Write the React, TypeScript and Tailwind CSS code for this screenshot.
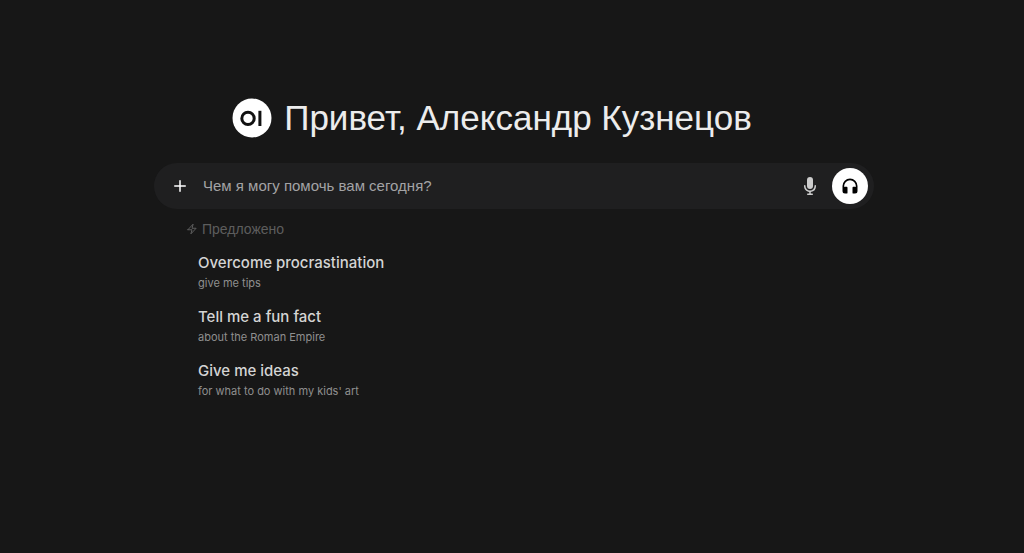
import React, { useState } from 'react'

const suggestions = [
  { title: 'Overcome procrastination', subtitle: 'give me tips' },
  { title: 'Tell me a fun fact', subtitle: 'about the Roman Empire' },
  { title: 'Give me ideas', subtitle: "for what to do with my kids' art" },
]

function Logo() {
  return (
    <svg viewBox="0 0 40 40" className="size-10 shrink-0" aria-hidden="true">
      <circle cx="20" cy="20" r="19.5" fill="#fff" />
      <circle cx="16" cy="20.4" r="6.2" fill="none" stroke="#111" strokeWidth="3" />
      <rect x="26.4" y="12.8" width="3" height="15.2" fill="#111" />
    </svg>
  )
}

function PlusIcon() {
  return (
    <svg viewBox="0 0 20 20" fill="currentColor" className="size-5" aria-hidden="true">
      <path d="M10.75 4.75a.75.75 0 0 0-1.5 0v4.5h-4.5a.75.75 0 0 0 0 1.5h4.5v4.5a.75.75 0 0 0 1.5 0v-4.5h4.5a.75.75 0 0 0 0-1.5h-4.5v-4.5Z" />
    </svg>
  )
}

function MicIcon() {
  return (
    <svg viewBox="0 0 20 20" fill="currentColor" className="size-5" aria-hidden="true">
      <path d="M7 4a3 3 0 0 1 6 0v6a3 3 0 1 1-6 0V4Z" />
      <path d="M5.5 9.643a.75.75 0 0 0-1.5 0V10c0 3.06 2.29 5.585 5.25 5.954V17.5h-1.5a.75.75 0 0 0 0 1.5h4.5a.75.75 0 0 0 0-1.5h-1.5v-1.546A6.001 6.001 0 0 0 16 10v-.357a.75.75 0 0 0-1.5 0V10a4.5 4.5 0 0 1-9 0v-.357Z" />
    </svg>
  )
}

function HeadphonesIcon() {
  return (
    <svg viewBox="0 0 24 24" fill="currentColor" className="size-5" aria-hidden="true">
      <path d="M12 5a7 7 0 0 0-7 7v1.17c.313-.11.65-.17 1-.17h2a1 1 0 0 1 1 1v6a1 1 0 0 1-1 1H6a3 3 0 0 1-3-3v-6a9 9 0 0 1 18 0v6a3 3 0 0 1-3 3h-2a1 1 0 0 1-1-1v-6a1 1 0 0 1 1-1h2c.35 0 .687.06 1 .17V12a7 7 0 0 0-7-7Z" />
    </svg>
  )
}

function BoltIcon() {
  return (
    <svg
      viewBox="0 0 24 24"
      fill="none"
      stroke="currentColor"
      strokeWidth="2"
      strokeLinecap="round"
      strokeLinejoin="round"
      className="size-3"
      aria-hidden="true"
    >
      <path d="m3.75 13.5 10.5-11.25L12 10.5h8.25L9.75 21.75 12 13.5H3.75Z" />
    </svg>
  )
}

export default function App() {
  const [prompt, setPrompt] = useState('')

  return (
    <main className="min-h-screen bg-[#171717] pt-[98px] pr-4 pl-5 font-['Liberation_Sans',sans-serif]">
      <div className="mx-auto w-full max-w-[720px]">
        <div className="flex items-center justify-center gap-3 pr-11">
          <Logo />
          <h1 className="text-[35px] leading-10 text-[#ececec]">Привет, Александр Кузнецов</h1>
        </div>

        <form
          className="mt-[25px] flex h-[46px] items-center rounded-full bg-[#1f1f20] pr-1.5 pl-4"
          onSubmit={(e) => e.preventDefault()}
        >
          <button type="button" aria-label="Добавить" className="text-white">
            <PlusIcon />
          </button>
          <input
            type="text"
            aria-label="Сообщение"
            placeholder="Чем я могу помочь вам сегодня?"
            value={prompt}
            onChange={(e) => setPrompt(e.target.value)}
            className="ml-3 min-w-0 flex-1 bg-transparent pl-px text-[15px] text-gray-100 outline-none placeholder:text-[#a3a3a5]"
          />
          <button type="button" aria-label="Голосовой ввод" className="mr-3 text-[#cdcdcd]">
            <MicIcon />
          </button>
          <button
            type="button"
            aria-label="Звонок"
            className="flex size-9 items-center justify-center rounded-full bg-white text-black"
          >
            <HeadphonesIcon />
          </button>
        </form>

        <section className="px-8 pt-2.5">
          <h2 className="flex items-center gap-1 text-sm text-[#5d5d5d]">
            <BoltIcon />
            Предложено
          </h2>
          <ul className="mt-2.5 px-3 font-['Inter',sans-serif]">
            {suggestions.map((item) => (
              <li key={item.title}>
                <button type="button" className="flex h-[54px] w-full flex-col pt-1 text-left">
                  <span className="text-[15px] leading-5 font-medium text-[#d4d4d4]">{item.title}</span>
                  <span className="text-[11px] leading-5 text-[#8f8f8f]">{item.subtitle}</span>
                </button>
              </li>
            ))}
          </ul>
        </section>
      </div>
    </main>
  )
}
